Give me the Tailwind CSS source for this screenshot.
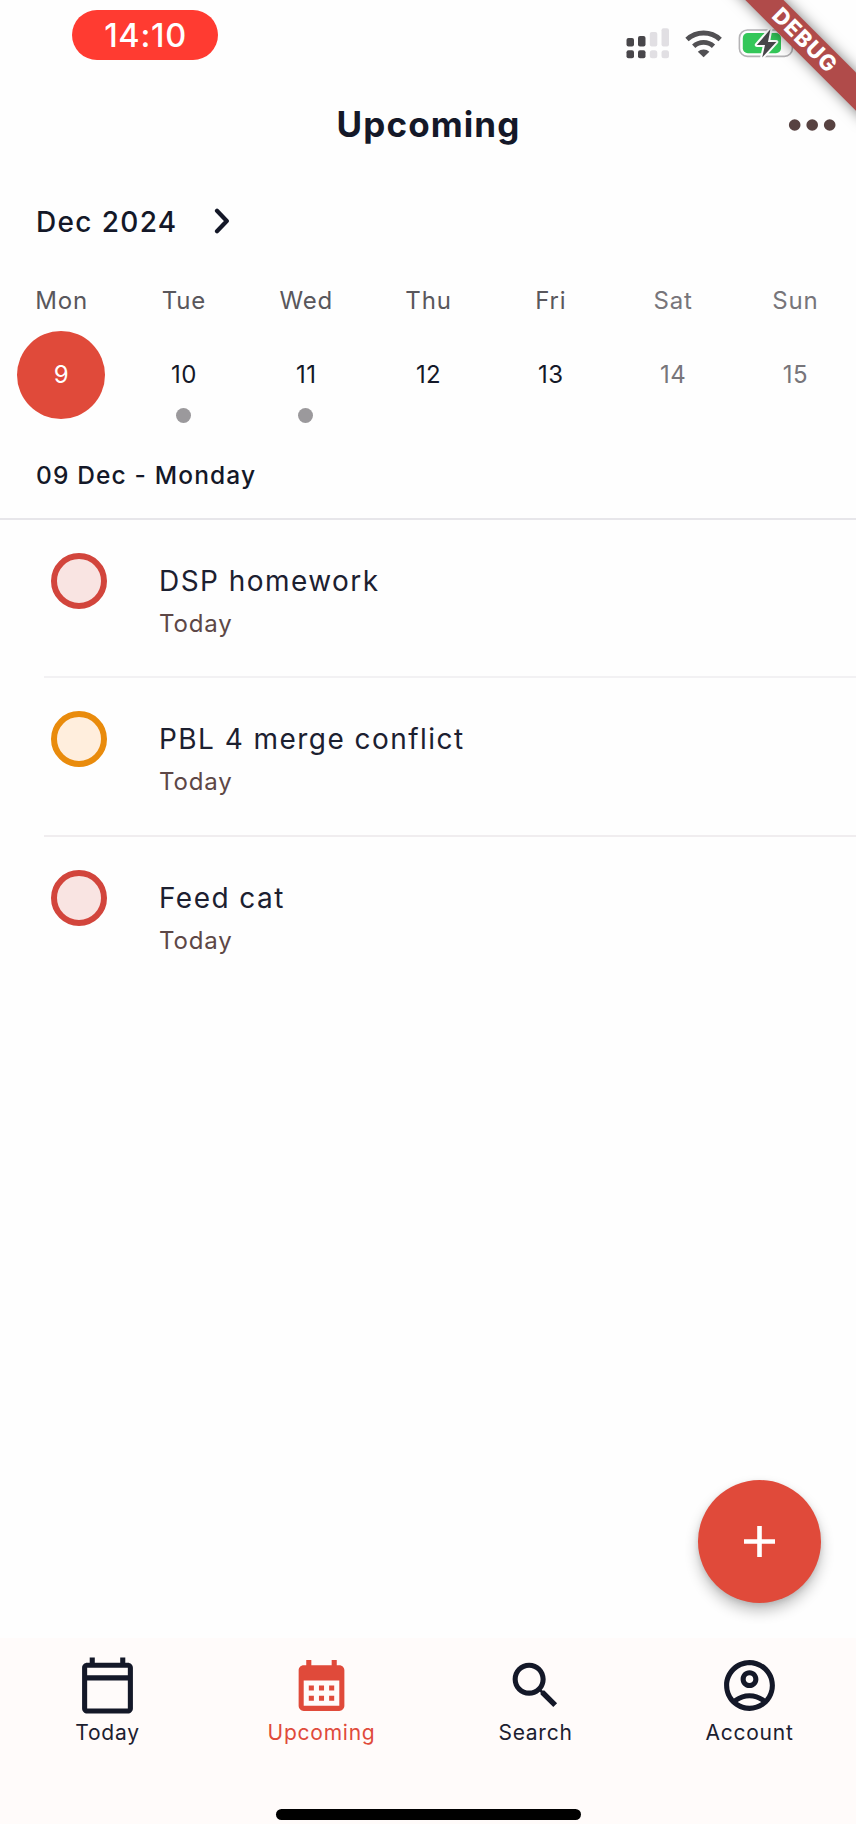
<!DOCTYPE html>
<html lang="en">
<head>
<meta charset="utf-8">
<title>Upcoming</title>
<script src="https://cdn.jsdelivr.net/npm/@tailwindcss/browser@4"></script>
</head>
<body class="bg-[#fefefe]">
<div class="relative flex h-[1824px] w-[856px] flex-col overflow-hidden bg-[#fefefe] font-['Inter',sans-serif] leading-none text-[#141828]">

  <!-- Status bar -->
  <div class="flex h-[80px] shrink-0 items-start justify-between pt-[10px] pl-[72px]">
    <div class="flex h-[50px] w-[146px] items-center justify-center rounded-full bg-[#ff3b31] pt-[2px] pl-[1px] text-[32.500px] font-medium tracking-[0.700px] text-white">14:10</div>
    <svg class="mt-[10px] h-[50px] w-[236px]" viewBox="620 20 236 50" fill="none">
      <g fill="#48464a">
        <rect x="626.5" y="38" width="7.5" height="8.5" rx="2"/><rect x="638" y="36" width="7.5" height="10.5" rx="2"/>
        <rect x="626.5" y="50.3" width="7.5" height="7.9" rx="2"/><rect x="638" y="50.3" width="7.5" height="7.9" rx="2"/>
      </g>
      <g fill="#e1dfe3">
        <rect x="649.8" y="32" width="7.5" height="14.6" rx="2"/><rect x="661.5" y="28.3" width="7.5" height="18.3" rx="2"/>
        <rect x="649.8" y="50.3" width="7.5" height="7.9" rx="2.5"/><rect x="661.5" y="50.3" width="7.5" height="7.9" rx="2.5"/>
      </g>
      <g stroke="#515053" stroke-width="4.8">
        <path d="M687 39.6a24.2 24.2 0 0 1 33.2 0"/>
        <path d="M693.7 46.2a14.6 14.6 0 0 1 19.8 0"/>
      </g>
      <path d="M697.8 51.8a8.4 8.4 0 0 1 11.6 0L703.6 57.3z" fill="#515053"/>
      <rect x="739.4" y="30" width="53" height="26.4" rx="8" stroke="#b4b3b5" stroke-width="1.6"/>
      <path d="M794.8 39v8.600c2.600-1 3-2.500 3-4.300s-.4-3.300-3-4.300z" fill="#b4b3b5"/>
      <rect x="742.8" y="33" width="38.200" height="20.200" rx="5" fill="#34c759"/>
      <path d="M770.400 29.300L756.800 44.900h8.200l-2.800 12.600L776.300 41.900h-8.300z" fill="#48464a" stroke="#fefefe" stroke-width="4" stroke-linejoin="round" paint-order="stroke"/>
    </svg>
  </div>

  <!-- App bar -->
  <div class="grid h-[90px] shrink-0 grid-cols-[1fr_auto_1fr] items-center">
    <h1 class="col-start-2 pb-[1px] pl-[1px] text-[35px] font-[650] tracking-[1.100px]">Upcoming</h1>
    <svg class="mr-[18px] h-[14px] w-[50px] justify-self-end" viewBox="0 0 50 14" fill="#574241"><circle cx="6.700" cy="7" r="5.800"/><circle cx="24.200" cy="7" r="5.800"/><circle cx="41.700" cy="7" r="5.800"/></svg>
  </div>

  <!-- Month picker -->
  <div class="flex h-[102px] shrink-0 items-center gap-[36px] pl-[36px]">
    <span class="pt-[2px] text-[28px] font-medium tracking-[1.350px]">Dec 2024</span>
    <svg class="h-[26px] w-[18px]" viewBox="0 0 18 26" fill="none" stroke="#141828" stroke-width="4.200" stroke-linecap="round" stroke-linejoin="round"><path d="M3 2.800L12.800 13L3 23.200"/></svg>
  </div>

  <!-- Week -->
  <div class="grid h-[164px] shrink-0 grid-cols-7 text-center text-[24px]">
    <div class="flex flex-col items-center"><span class="flex h-[59px] items-center pb-[1px] pl-[1px] tracking-[0.800px] text-[#59575c]">Mon</span><span class="flex size-[88px] items-center justify-center rounded-full bg-[#e04a3a] text-white">9</span></div>
    <div class="flex flex-col items-center"><span class="flex h-[59px] items-center pb-[1px] pl-[1px] tracking-[0.800px] text-[#59575c]">Tue</span><span class="flex h-[88px] items-center pl-[1px] tracking-[0.400px]">10</span><span class="-mt-[11px] size-[15px] rounded-full bg-[#9b999c]"></span></div>
    <div class="flex flex-col items-center"><span class="flex h-[59px] items-center pb-[1px] pl-[1px] tracking-[0.800px] text-[#59575c]">Wed</span><span class="flex h-[88px] items-center pl-[1px] tracking-[0.400px]">11</span><span class="-mt-[11px] size-[15px] rounded-full bg-[#9b999c]"></span></div>
    <div class="flex flex-col items-center"><span class="flex h-[59px] items-center pb-[1px] pl-[1px] tracking-[0.800px] text-[#59575c]">Thu</span><span class="flex h-[88px] items-center pl-[1px] tracking-[0.400px]">12</span></div>
    <div class="flex flex-col items-center"><span class="flex h-[59px] items-center pb-[1px] pl-[1px] tracking-[0.800px] text-[#59575c]">Fri</span><span class="flex h-[88px] items-center pl-[1px] tracking-[0.400px]">13</span></div>
    <div class="flex flex-col items-center text-[#77757a]"><span class="flex h-[59px] items-center pb-[1px] pl-[1px] tracking-[0.800px]">Sat</span><span class="flex h-[88px] items-center pl-[1px] tracking-[0.400px]">14</span></div>
    <div class="flex flex-col items-center text-[#77757a]"><span class="flex h-[59px] items-center pb-[1px] pl-[1px] tracking-[0.800px]">Sun</span><span class="flex h-[88px] items-center pl-[1px] tracking-[0.400px]">15</span></div>
  </div>

  <div class="flex h-[84px] shrink-0 items-center border-b-2 border-[#e7e6ea] pb-[3px] pl-[36px] text-[24.500px] font-medium tracking-[1.150px]">09 Dec - Monday</div>

  <!-- Tasks -->
  <ul class="flex flex-1 flex-col">
    <li class="ml-[44px] flex h-[158.300px] items-start gap-[52px] border-b-2 border-[#f2f1f3] pt-[33px] pl-[7px]">
      <span class="size-[56px] rounded-full border-[6px] border-[#d2453c] bg-[#f9e4e2]"></span>
      <div class="flex flex-col pt-[14px]"><span class="text-[28px] tracking-[1.450px] text-[#1c2030]">DSP homework</span><span class="mt-[17px] text-[24px] tracking-[0.850px] text-[#5d4746]">Today</span></div>
    </li>
    <li class="ml-[44px] flex h-[158.300px] items-start gap-[52px] border-b-2 border-[#f0edef] pt-[33px] pl-[7px]">
      <span class="size-[56px] rounded-full border-[6px] border-[#e98b0c] bg-[#ffeedd]"></span>
      <div class="flex flex-col pt-[14px]"><span class="text-[28px] tracking-[1.450px] text-[#1c2030]">PBL 4 merge conflict</span><span class="mt-[17px] text-[24px] tracking-[0.850px] text-[#5d4746]">Today</span></div>
    </li>
    <li class="ml-[44px] flex h-[158.300px] items-start gap-[52px] pt-[33px] pl-[7px]">
      <span class="size-[56px] rounded-full border-[6px] border-[#d2453c] bg-[#f9e4e2]"></span>
      <div class="flex flex-col pt-[14px]"><span class="text-[28px] tracking-[1.450px] text-[#1c2030]">Feed cat</span><span class="mt-[17px] text-[24px] tracking-[0.850px] text-[#5d4746]">Today</span></div>
    </li>
  </ul>

  <!-- Add task -->
  <button class="absolute right-[35px] bottom-[221px] flex size-[123px] items-center justify-center rounded-full bg-[#e04a3a] shadow-[0_8px_14px_rgba(0,0,0,0.24),0_2px_5px_rgba(0,0,0,0.1)]" aria-label="Add task">
    <svg class="size-[31px]" viewBox="0 0 31 31" stroke="#fff" stroke-width="4.600"><path d="M15.500 0v31M0 15.500h31"/></svg>
  </button>

  <!-- Bottom navigation -->
  <nav class="flex h-[186px] shrink-0 flex-col justify-between bg-[#fffbfa] pt-[17px] pb-[4px]">
    <div class="grid grid-cols-4 text-[21px] tracking-[0.750px] text-[#1c2030]">
      <div class="flex flex-col items-center gap-[6px]">
        <svg class="size-[61px]" viewBox="0 0 24 24" fill="#141828"><path d="M20 3h-1V1h-2v2H7V1H5v2H4c-1.100 0-2 .9-2 2v16c0 1.100.9 2 2 2h16c1.100 0 2-.9 2-2V5c0-1.100-.9-2-2-2zm0 18H4V10h16v11zm0-13H4V5h16v3z"/></svg>
        <span class="pl-[1px]">Today</span>
      </div>
      <div class="flex flex-col items-center gap-[6px] text-[#e04a3a]">
        <svg class="size-[61px]" viewBox="0 0 24 24" fill="currentColor"><path d="M19 4h-1V2h-2v2H8V2H6v2H5c-1.110 0-1.990.9-1.990 2L3 20c0 1.100.89 2 2 2h14c1.100 0 2-.9 2-2V6c0-1.100-.9-2-2-2zm0 16H5V10h14v10zM9 14H7v-2h2v2zm4 0h-2v-2h2v2zm4 0h-2v-2h2v2zm-8 4H7v-2h2v2zm4 0h-2v-2h2v2zm4 0h-2v-2h2v2z"/></svg>
        <span class="pl-[1px]">Upcoming</span>
      </div>
      <div class="flex flex-col items-center gap-[6px]">
        <svg class="size-[61px]" viewBox="0 0 24 24" fill="#141828"><path d="M15.500 14h-.79l-.28-.27C15.410 12.590 16 11.110 16 9.500 16 5.910 13.090 3 9.500 3S3 5.910 3 9.500 5.910 16 9.500 16c1.610 0 3.090-.59 4.230-1.570l.27.28v.79l5 4.990L20.490 19l-4.990-5zm-6 0C7.010 14 5 11.990 5 9.500S7.010 5 9.500 5 14 7.010 14 9.500 11.990 14 9.500 14z"/></svg>
        <span class="pl-[1px]">Search</span>
      </div>
      <div class="flex flex-col items-center gap-[6px]">
        <svg class="size-[61px]" viewBox="0 0 24 24" fill="#141828"><path d="M12 2C6.480 2 2 6.480 2 12s4.480 10 10 10 10-4.480 10-10S17.520 2 12 2zM7.350 18.500C8.660 17.560 10.260 17 12 17s3.340.56 4.650 1.500C15.340 19.440 13.740 20 12 20s-3.340-.56-4.650-1.500zm10.790-1.380C16.450 15.800 14.320 15 12 15s-4.450.8-6.140 2.120C4.700 15.730 4 13.950 4 12c0-4.420 3.580-8 8-8s8 3.580 8 8c0 1.950-.7 3.730-1.860 5.120zM12 6c-1.930 0-3.500 1.570-3.500 3.500S10.070 13 12 13s3.500-1.570 3.500-3.500S13.930 6 12 6zm0 5c-.83 0-1.500-.67-1.500-1.500S11.170 8 12 8s1.500.67 1.500 1.500S12.830 11 12 11z"/></svg>
        <span class="pl-[1px]">Account</span>
      </div>
    </div>
    <div class="h-[11px] w-[305px] self-center rounded-full bg-black"></div>
  </nav>

  <!-- Debug ribbon -->
  <div class="absolute top-[26.500px] left-[704.500px] flex h-[26.500px] w-[200px] rotate-45 items-center justify-center bg-[#b04b4a] text-[22px] font-extrabold tracking-[1px] text-white shadow-[0_0_14px_rgba(0,0,0,0.5)]">DEBUG</div>
</div>
</body>
</html>
